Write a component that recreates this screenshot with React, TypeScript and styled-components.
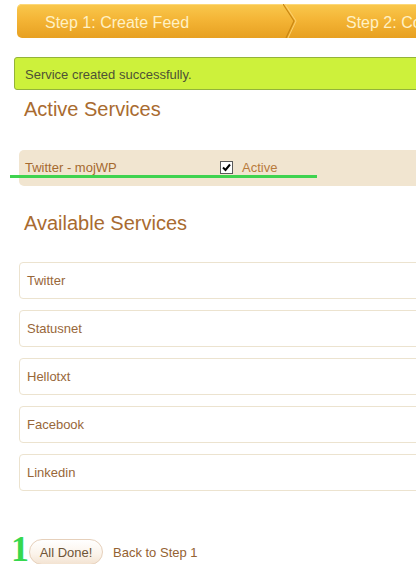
import styled, { createGlobalStyle } from 'styled-components';

const GlobalStyle = createGlobalStyle`
  html, body {
    margin: 0;
    padding: 0;
    background: #ffffff;
    overflow: hidden;
  }
  body {
    font-family: 'Liberation Sans', Arial, sans-serif;
  }
`;

const Page = styled.div`
  width: 640px;
  padding-top: 4px;
  display: flex;
  flex-direction: column;
`;

const StepBar = styled.div`
  margin-left: 17px;
  height: 34px;
  display: flex;
  align-items: center;
  border-radius: 5px 0 0 5px;
  background: linear-gradient(to bottom, #f9c84e 0%, #f4b536 45%, #e7a021 100%);
  box-shadow: inset 0 1px 0 #fcd878;
`;

const Step = styled.div<{ $width: number; $pad: number }>`
  width: ${(p) => p.$width}px;
  padding: 4px 0 0 ${(p) => p.$pad}px;
  box-sizing: border-box;
  font-size: 16px;
  color: #fff1c4;
  white-space: nowrap;
`;

const Chevron = styled.svg`
  width: 14px;
  height: 34px;
  flex-shrink: 0;
`;

const Alert = styled.div`
  margin: 19px 0 0 14px;
  height: 33px;
  box-sizing: border-box;
  border: 1px solid #93b33a;
  border-radius: 3px;
  background: #cdf13b;
  display: flex;
  align-items: center;
  padding: 2px 0 0 10px;
  font-size: 13px;
  color: #4d5236;
`;

const Heading = styled.h2<{ $top: number }>`
  margin: ${(p) => p.$top}px 0 0 24px;
  font-size: 20px;
  line-height: 24px;
  font-weight: normal;
  color: #a96b30;
`;

const ActiveRow = styled.div`
  position: relative;
  margin: 29px 0 0 19px;
  height: 36px;
  border-radius: 5px 0 0 5px;
  background: #f1e5d0;
  display: flex;
  align-items: center;
  font-size: 13px;
  color: #a5692f;
`;

const ActiveName = styled.span`
  width: 201px;
  box-sizing: border-box;
  padding-left: 6px;
  margin-top: -2px;
`;

const CheckBox = styled.span`
  width: 11px;
  height: 11px;
  border: 1px solid #5a5a5a;
  background: #ffffff;
  display: flex;
  align-items: center;
  justify-content: center;
  margin-top: -2px;
`;

const ActiveLabel = styled.span`
  margin-left: 9px;
  margin-top: -2px;
  color: #b87a3c;
`;

const Underline = styled.div`
  position: absolute;
  left: -9px;
  top: 25px;
  width: 307px;
  height: 3px;
  background: #3fd34f;
`;

const ServiceList = styled.div`
  margin: 27px 0 0 19px;
  display: flex;
  flex-direction: column;
  gap: 11px;
`;

const ServiceBox = styled.div`
  height: 37px;
  box-sizing: border-box;
  border: 1px solid #ece3cf;
  border-radius: 4px 0 0 4px;
  background: #ffffff;
  display: flex;
  align-items: center;
  padding-left: 7px;
  font-size: 13px;
  color: #98673a;
`;

const Footer = styled.div`
  margin: 44px 0 0 11px;
  display: flex;
  align-items: flex-end;
`;

const Marker = styled.span`
  font-family: 'Liberation Serif', 'Times New Roman', serif;
  font-weight: bold;
  font-size: 36px;
  line-height: 29px;
  color: #36d84e;
  width: 18px;
`;

const DoneButton = styled.button`
  width: 74px;
  height: 26px;
  border: 1px solid #e6d0bb;
  border-radius: 13px;
  background: linear-gradient(to bottom, #ffffff 0%, #fbf3ea 60%, #f3e3d2 100%);
  font-family: 'Liberation Sans', Arial, sans-serif;
  font-size: 13px;
  color: #6e5436;
  padding: 0;
  margin-bottom: -1px;
`;

const BackLink = styled.span`
  margin: 0 0 4px 10px;
  font-size: 13px;
  color: #946232;
`;

const services = ['Twitter', 'Statusnet', 'Hellotxt', 'Facebook', 'Linkedin'];

export default function App() {
  return (
    <>
      <GlobalStyle />
      <Page>
        <StepBar>
          <Step $width={266} $pad={28}>Step 1: Create Feed</Step>
          <Chevron viewBox="0 0 14 34">
            <polyline points="0,0 11,17 3,34" fill="none" stroke="#c98612" strokeWidth="1.2" />
            <polyline points="2,0 13,17 5,34" fill="none" stroke="#fcd070" strokeWidth="1" />
          </Chevron>
          <Step $width={300} $pad={49}>Step 2: Configure Feed</Step>
        </StepBar>

        <Alert>Service created successfully.</Alert>

        <Heading $top={7}>Active Services</Heading>

        <ActiveRow>
          <ActiveName>Twitter - mojWP</ActiveName>
          <CheckBox>
            <svg width="9" height="9" viewBox="0 0 9 9">
              <path d="M1 4.5 L3.5 7 L8 1.5" fill="none" stroke="#000" strokeWidth="2" />
            </svg>
          </CheckBox>
          <ActiveLabel>Active</ActiveLabel>
          <Underline />
        </ActiveRow>

        <Heading $top={25}>Available Services</Heading>

        <ServiceList>
          {services.map((s) => (
            <ServiceBox key={s}>{s}</ServiceBox>
          ))}
        </ServiceList>

        <Footer>
          <Marker>1</Marker>
          <DoneButton type="button">All Done!</DoneButton>
          <BackLink>Back to Step 1</BackLink>
        </Footer>
      </Page>
    </>
  );
}
